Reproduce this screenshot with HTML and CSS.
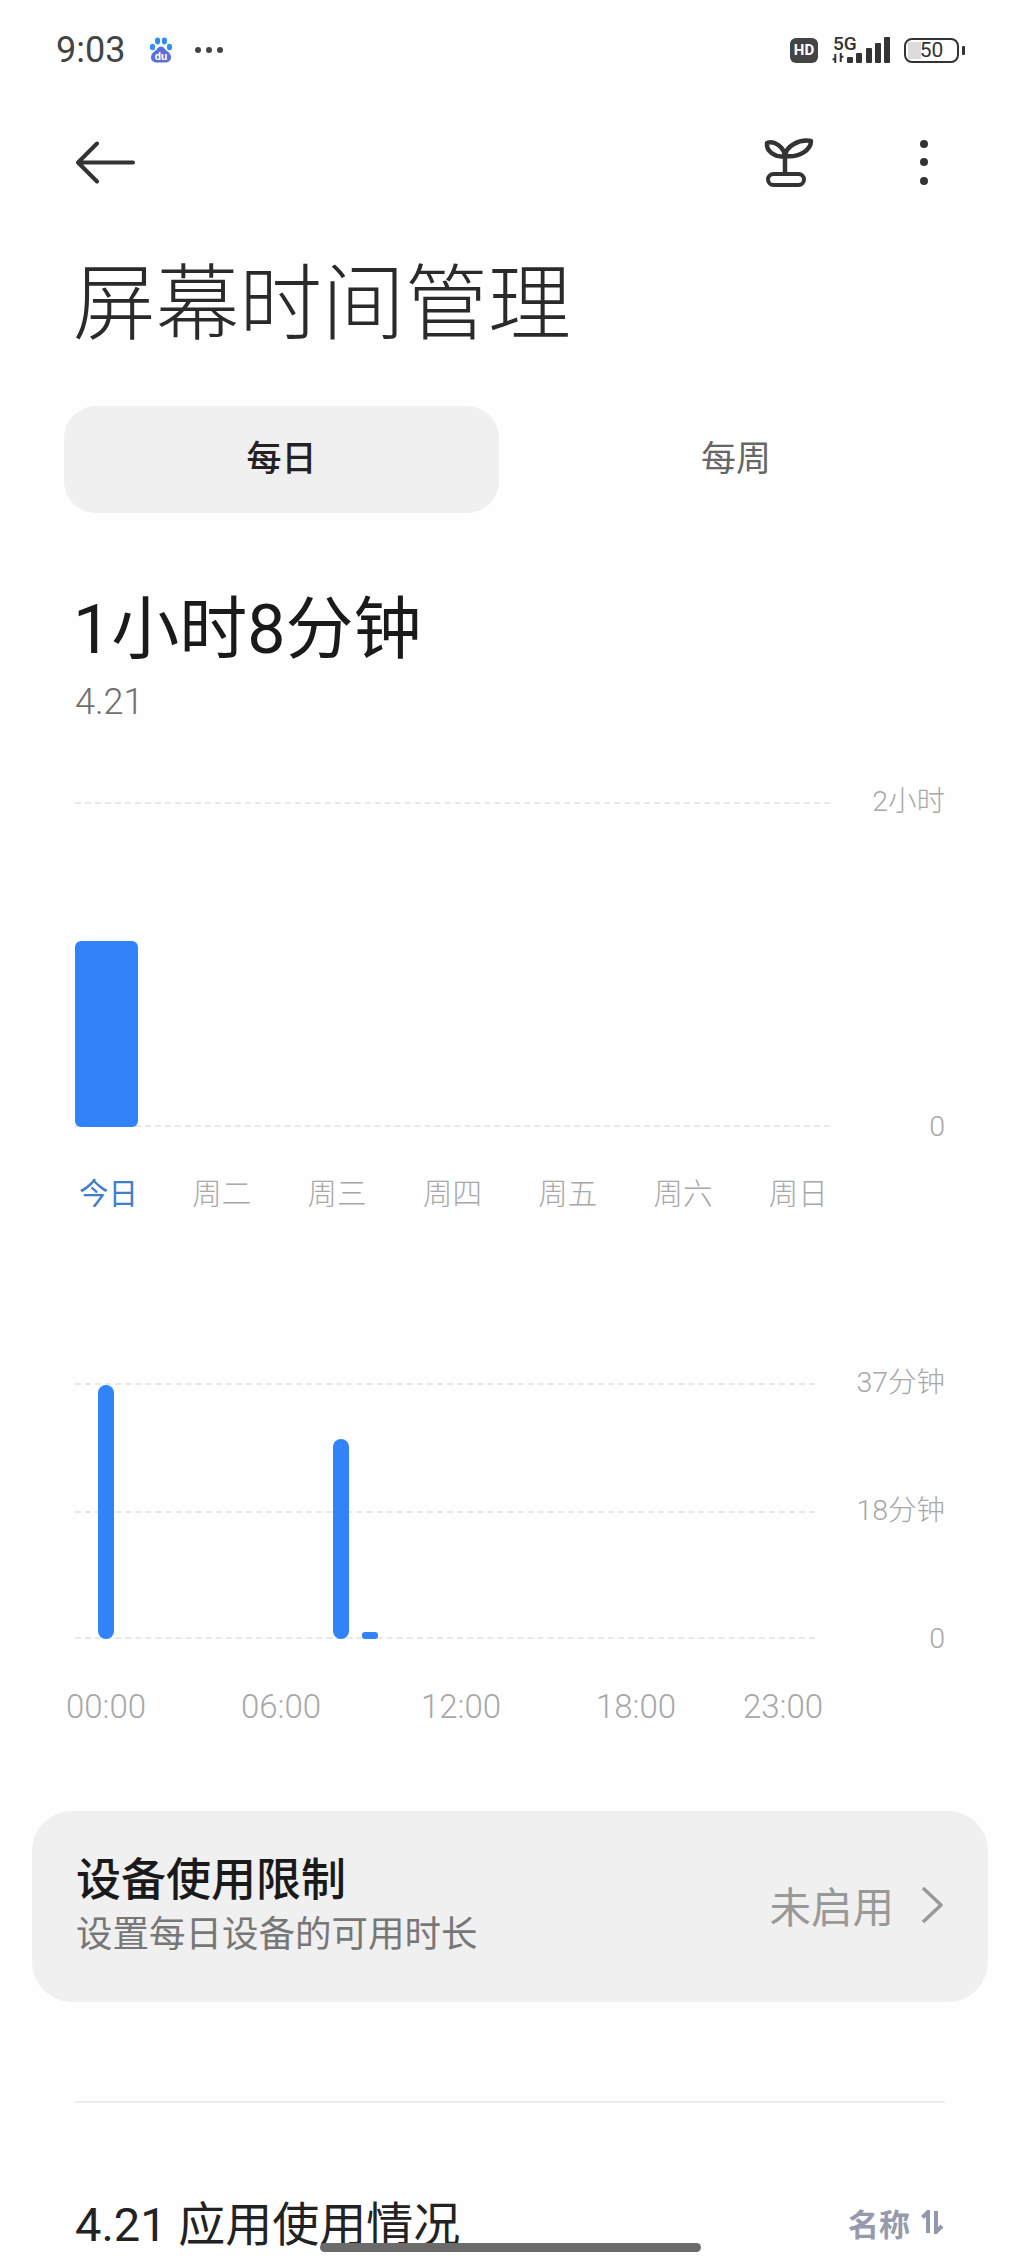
FILE: index.html
```html
<!DOCTYPE html>
<html lang="zh-CN">
<head>
    <meta charset="UTF-8">
    <meta name="viewport" content="width=device-width, initial-scale=1.0">
    <title>屏幕时间管理</title>
    <link rel="stylesheet" href="styles.css">
</head>
<body>
    <div class="status-bar">
        <div class="status-left">
            <span class="clock">9:03</span>
            <svg class="baidu" width="24" height="26" viewBox="0 0 24 26">
                <ellipse cx="3.500" cy="10" rx="2.600" ry="3.200" fill="#2f93e8"/>
                <ellipse cx="8.600" cy="4" rx="2.600" ry="3.400" fill="#2f8fe8"/>
                <ellipse cx="15.400" cy="4" rx="2.600" ry="3.400" fill="#2f8fe8"/>
                <ellipse cx="20.500" cy="10" rx="2.600" ry="3.200" fill="#2f93e8"/>
                <path d="M12 9.500c3 0 4 3 6 4.500 3 2 4 4 4 6.500 0 3.500-3 5-6 5H8c-3 0-6-1.500-6-5 0-2.500 1-4.500 4-6.500 2-1.500 3-4.500 6-4.500z" fill="#5a6fdc"/>
                <text class="baidu-du" x="12" y="23" text-anchor="middle">du</text>
            </svg>
            <span class="status-dots"><i></i><i></i><i></i></span>
        </div>
        <div class="status-right">
            <span class="hd-badge">HD</span>
            <div class="network">
                <span class="net-label">5G</span>
                <svg class="net-arrows" width="14" height="11" viewBox="0 0 14 11">
                    <path d="M4 1v10M1 7h3M10 0v10M10 4h3" stroke="#333" stroke-width="2.200" fill="none"/>
                </svg>
            </div>
            <div class="signal">
                <i style="height:6px"></i><i style="height:10px"></i><i style="height:15px"></i><i style="height:20px"></i><i style="height:26px"></i>
            </div>
            <div class="battery">
                <div class="battery-body"><span class="battery-fill"></span><span class="battery-num">50</span></div>
                <span class="battery-cap"></span>
            </div>
        </div>
    </div>

    <div class="toolbar">
        <svg class="icon-back" width="60" height="43" viewBox="0 0 60 43">
            <path d="M22 2.500L3 21.500l19 19M3 21.500h55" fill="none" stroke="#333" stroke-width="4" stroke-linecap="round" stroke-linejoin="round"/>
        </svg>
        <div class="toolbar-actions">
            <svg class="icon-sprout" width="52" height="52" viewBox="0 0 52 52">
                <path d="M22 20C21 11 11 4 4 7c-1 8 8 15 18 13zM22 20C23 10 36 3 48 5c0 9-12 17-26 15zM22 20v17" fill="none" stroke="#333" stroke-width="4.500" stroke-linejoin="round"/>
                <rect x="5" y="38" width="36" height="11" rx="5.500" fill="none" stroke="#333" stroke-width="4"/>
            </svg>
            <div class="icon-more"><i></i><i></i><i></i></div>
        </div>
    </div>

    <h1 class="page-title">屏幕时间管理</h1>

    <div class="tabs">
        <div class="tab tab-active">每日</div>
        <div class="tab">每周</div>
    </div>

    <div class="total">1小时8分钟</div>
    <div class="date">4.21</div>

    <div class="chart chart-week">
        <div class="plot plot-week">
            <div class="day-bar" style="height:186px"></div>
        </div>
        <div class="axis">
            <span>2小时</span>
            <span>0</span>
        </div>
    </div>
    <div class="days">
        <span class="day-today">今日</span>
        <span>周二</span>
        <span>周三</span>
        <span>周四</span>
        <span>周五</span>
        <span>周六</span>
        <span>周日</span>
    </div>

    <div class="chart chart-hours">
        <div class="plot plot-hours">
            <div class="plot-mid"></div>
            <div class="hour-bar" style="grid-column:1;height:254px"></div>
            <div class="hour-bar" style="grid-column:9;height:200px"></div>
            <div class="hour-bar hour-bar-short" style="grid-column:10;height:7px"></div>
        </div>
        <div class="axis">
            <span>37分钟</span>
            <span>18分钟</span>
            <span>0</span>
        </div>
    </div>
    <div class="hours">
        <span>00:00</span>
        <span>06:00</span>
        <span>12:00</span>
        <span>18:00</span>
        <span>23:00</span>
    </div>

    <div class="limit-card">
        <div class="limit-text">
            <div class="limit-title">设备使用限制</div>
            <div class="limit-sub">设置每日设备的可用时长</div>
        </div>
        <div class="limit-state">
            <span>未启用</span>
            <svg width="22" height="38" viewBox="0 0 22 38">
                <path d="M2 2l18 17L2 36" fill="none" stroke="#999" stroke-width="3.500" stroke-linejoin="round"/>
            </svg>
        </div>
    </div>

    <div class="divider"></div>

    <div class="apps-head">
        <div class="apps-title">4.21 应用使用情况</div>
        <div class="apps-sort">
            <span>名称</span>
            <svg width="24" height="24" viewBox="0 0 24 24">
                <path d="M7 23V2L1.500 7.500M15 1v21l6-6" fill="none" stroke="#9298ab" stroke-width="4"/>
            </svg>
        </div>
    </div>

    <div class="home-bar"></div>
</body>
</html>
```

FILE: styles.css
```css
html, body {
    margin: 0;
    padding: 0;
}
body {
    position: relative;
    width: 1020px;
    height: 2267px;
    overflow: hidden;
    background-color: #fefefe;
    color: #333;
    font-family: Roboto, "Noto Sans CJK SC", sans-serif;
}

/* status bar */
.status-bar {
    display: flex;
    justify-content: space-between;
    align-items: center;
    height: 26px;
    padding: 37px 55px 0 56px;
}
.status-left {
    display: flex;
    align-items: center;
}
.clock {
    font-size: 36px;
    line-height: 26px;
    color: #444;
    width: 93px;
}
.baidu-du {
    font-family: Roboto, sans-serif;
    font-size: 11px;
    font-weight: 700;
    fill: #fff;
}
.status-dots {
    display: flex;
    gap: 5px;
    margin-left: 22px;
}
.status-dots i {
    width: 6px;
    height: 6px;
    border-radius: 50%;
    background-color: #444;
}
.status-right {
    display: flex;
    align-items: center;
}
.hd-badge {
    width: 28px;
    height: 25px;
    border-radius: 6px;
    background-color: #444;
    color: #fff;
    font-size: 15px;
    font-weight: 700;
    line-height: 25px;
    text-align: center;
}
.network {
    display: flex;
    flex-direction: column;
    width: 15px;
    height: 26px;
    margin-left: 13px;
}
.net-label {
    margin-left: 2px;
    font-size: 19px;
    font-weight: 500;
    line-height: 14px;
    white-space: nowrap;
    color: #333;
}
.net-arrows {
    margin-top: 2px;
}
.signal {
    display: flex;
    align-items: flex-end;
    gap: 3.250px;
    height: 26px;
    margin-left: 1px;
}
.signal i {
    width: 6px;
    background-color: #333;
    border-radius: 1px;
}
.battery {
    display: flex;
    align-items: center;
    margin-left: 14px;
}
.battery-body {
    position: relative;
    width: 51px;
    height: 21px;
    border: 2.500px solid #333;
    border-radius: 8px;
    font-size: 21px;
    line-height: 21px;
    text-align: center;
    overflow: hidden;
}
.battery-fill {
    position: absolute;
    left: 2px;
    top: 2px;
    bottom: 2px;
    width: 13px;
    background-color: #dcdcdc;
}
.battery-num {
    position: relative;
}
.battery-cap {
    width: 3px;
    height: 9px;
    margin-left: 3px;
    border-radius: 1px;
    background-color: #333;
}

/* toolbar and title */
.toolbar {
    display: flex;
    justify-content: space-between;
    align-items: center;
    height: 48px;
    margin-top: 75px;
    padding: 0 92px 0 75px;
}
.toolbar-actions {
    display: flex;
    align-items: center;
    gap: 105px;
}
.icon-more {
    display: flex;
    flex-direction: column;
    gap: 10.500px;
}
.icon-more i {
    width: 8px;
    height: 8px;
    border-radius: 50%;
    background-color: #333;
}
.page-title {
    margin: 77px 0 0 73px;
    font-size: 83px;
    font-weight: 300;
    line-height: 84px;
    color: #2a2a2a;
}

/* day / week switch */
.tabs {
    display: grid;
    grid-template-columns: 435px 474px;
    height: 106px;
    margin: 59px 0 0 64px;
}
.tab {
    border-radius: 32px;
    font-size: 35px;
    line-height: 107px;
    text-align: center;
    color: #666;
}
.tab-active {
    background-color: #f0f0f0;
    color: #222;
    font-weight: 500;
}

/* totals */
.total {
    margin: 78px 0 0 73px;
    font-size: 68px;
    font-weight: 400;
    line-height: 80px;
    color: #1a1a1a;
}
.date {
    margin: 12px 0 0 75px;
    font-size: 36px;
    font-weight: 300;
    line-height: 40px;
    color: #6f6f6f;
}

/* charts */
.chart {
    display: flex;
    padding: 0 75px;
}
.chart-week {
    margin-top: 80px;
}
.chart-hours {
    margin-top: 169px;
}
.plot {
    position: relative;
    box-sizing: border-box;
    border-top: 2px dashed #e8e8e8;
    border-bottom: 2px dashed #e8e8e8;
}
.plot-week {
    display: flex;
    align-items: flex-end;
    width: 755px;
    height: 325px;
}
.day-bar {
    width: 63px;
    margin-bottom: -2px;
    border-radius: 6px;
    background-color: #3282fa;
}
.plot-hours {
    display: grid;
    grid-template-columns: repeat(24, 29.400px);
    justify-items: center;
    align-items: end;
    width: 740px;
    height: 256px;
    padding-left: 16px;
}
.plot-mid {
    position: absolute;
    left: 0;
    right: 0;
    top: 50%;
    border-top: 2px dashed #e8e8e8;
}
.hour-bar {
    position: relative;
    grid-row: 1;
    width: 16px;
    margin-bottom: -2px;
    border-radius: 8px;
    background-color: #3282fa;
}
.hour-bar-short {
    border-radius: 3px;
}
.axis {
    flex: 1;
    display: flex;
    flex-direction: column;
    justify-content: space-between;
    text-align: right;
    font-size: 28.500px;
    font-weight: 300;
    color: #a8a8a8;
}
.axis span {
    height: 0;
    line-height: 0;
}
.days {
    display: grid;
    grid-template-columns: repeat(7, 115.300px);
    margin: 47px 0 0 77px;
    font-size: 29.500px;
    font-weight: 300;
    line-height: 40px;
    color: #a8a8a8;
}
.day-today {
    padding-left: 2px;
    color: #3f7fc9;
    font-weight: 400;
}
.hours {
    display: grid;
    grid-template-columns: 175px 180px 175px 147px auto;
    margin: 48px 0 0 66px;
    font-size: 33px;
    font-weight: 300;
    line-height: 40px;
    color: #a8a8a8;
}

/* limit card */
.limit-card {
    display: flex;
    justify-content: space-between;
    align-items: center;
    box-sizing: border-box;
    width: 956px;
    height: 191px;
    margin: 84px 0 0 32px;
    padding: 0 45px 0 44px;
    border-radius: 40px;
    background-color: #f0f0f0;
}
.limit-title {
    font-size: 45px;
    font-weight: 500;
    line-height: 50px;
    color: #1a1a1a;
}
.limit-sub {
    margin-top: 7px;
    font-size: 36.500px;
    line-height: 44px;
    color: #777;
}
.limit-state {
    display: flex;
    align-items: center;
    gap: 27px;
    padding-bottom: 4px;
    font-size: 41.500px;
    color: #999;
}
.divider {
    height: 2px;
    margin: 99px 75px 0;
    background-color: #ececec;
}

/* app usage heading */
.apps-head {
    display: flex;
    justify-content: space-between;
    align-items: center;
    height: 56px;
    margin-top: 94px;
    padding: 0 75px;
}
.apps-title {
    font-size: 47px;
    line-height: 56px;
    color: #222;
}
.apps-sort {
    display: flex;
    align-items: center;
    gap: 11px;
    padding-bottom: 6px;
    font-size: 31px;
    font-weight: 700;
    color: #959bac;
}
.home-bar {
    position: absolute;
    left: 320px;
    top: 2243px;
    width: 381px;
    height: 9px;
    border-radius: 5px;
    background-color: #6b6b6b;
}
```
